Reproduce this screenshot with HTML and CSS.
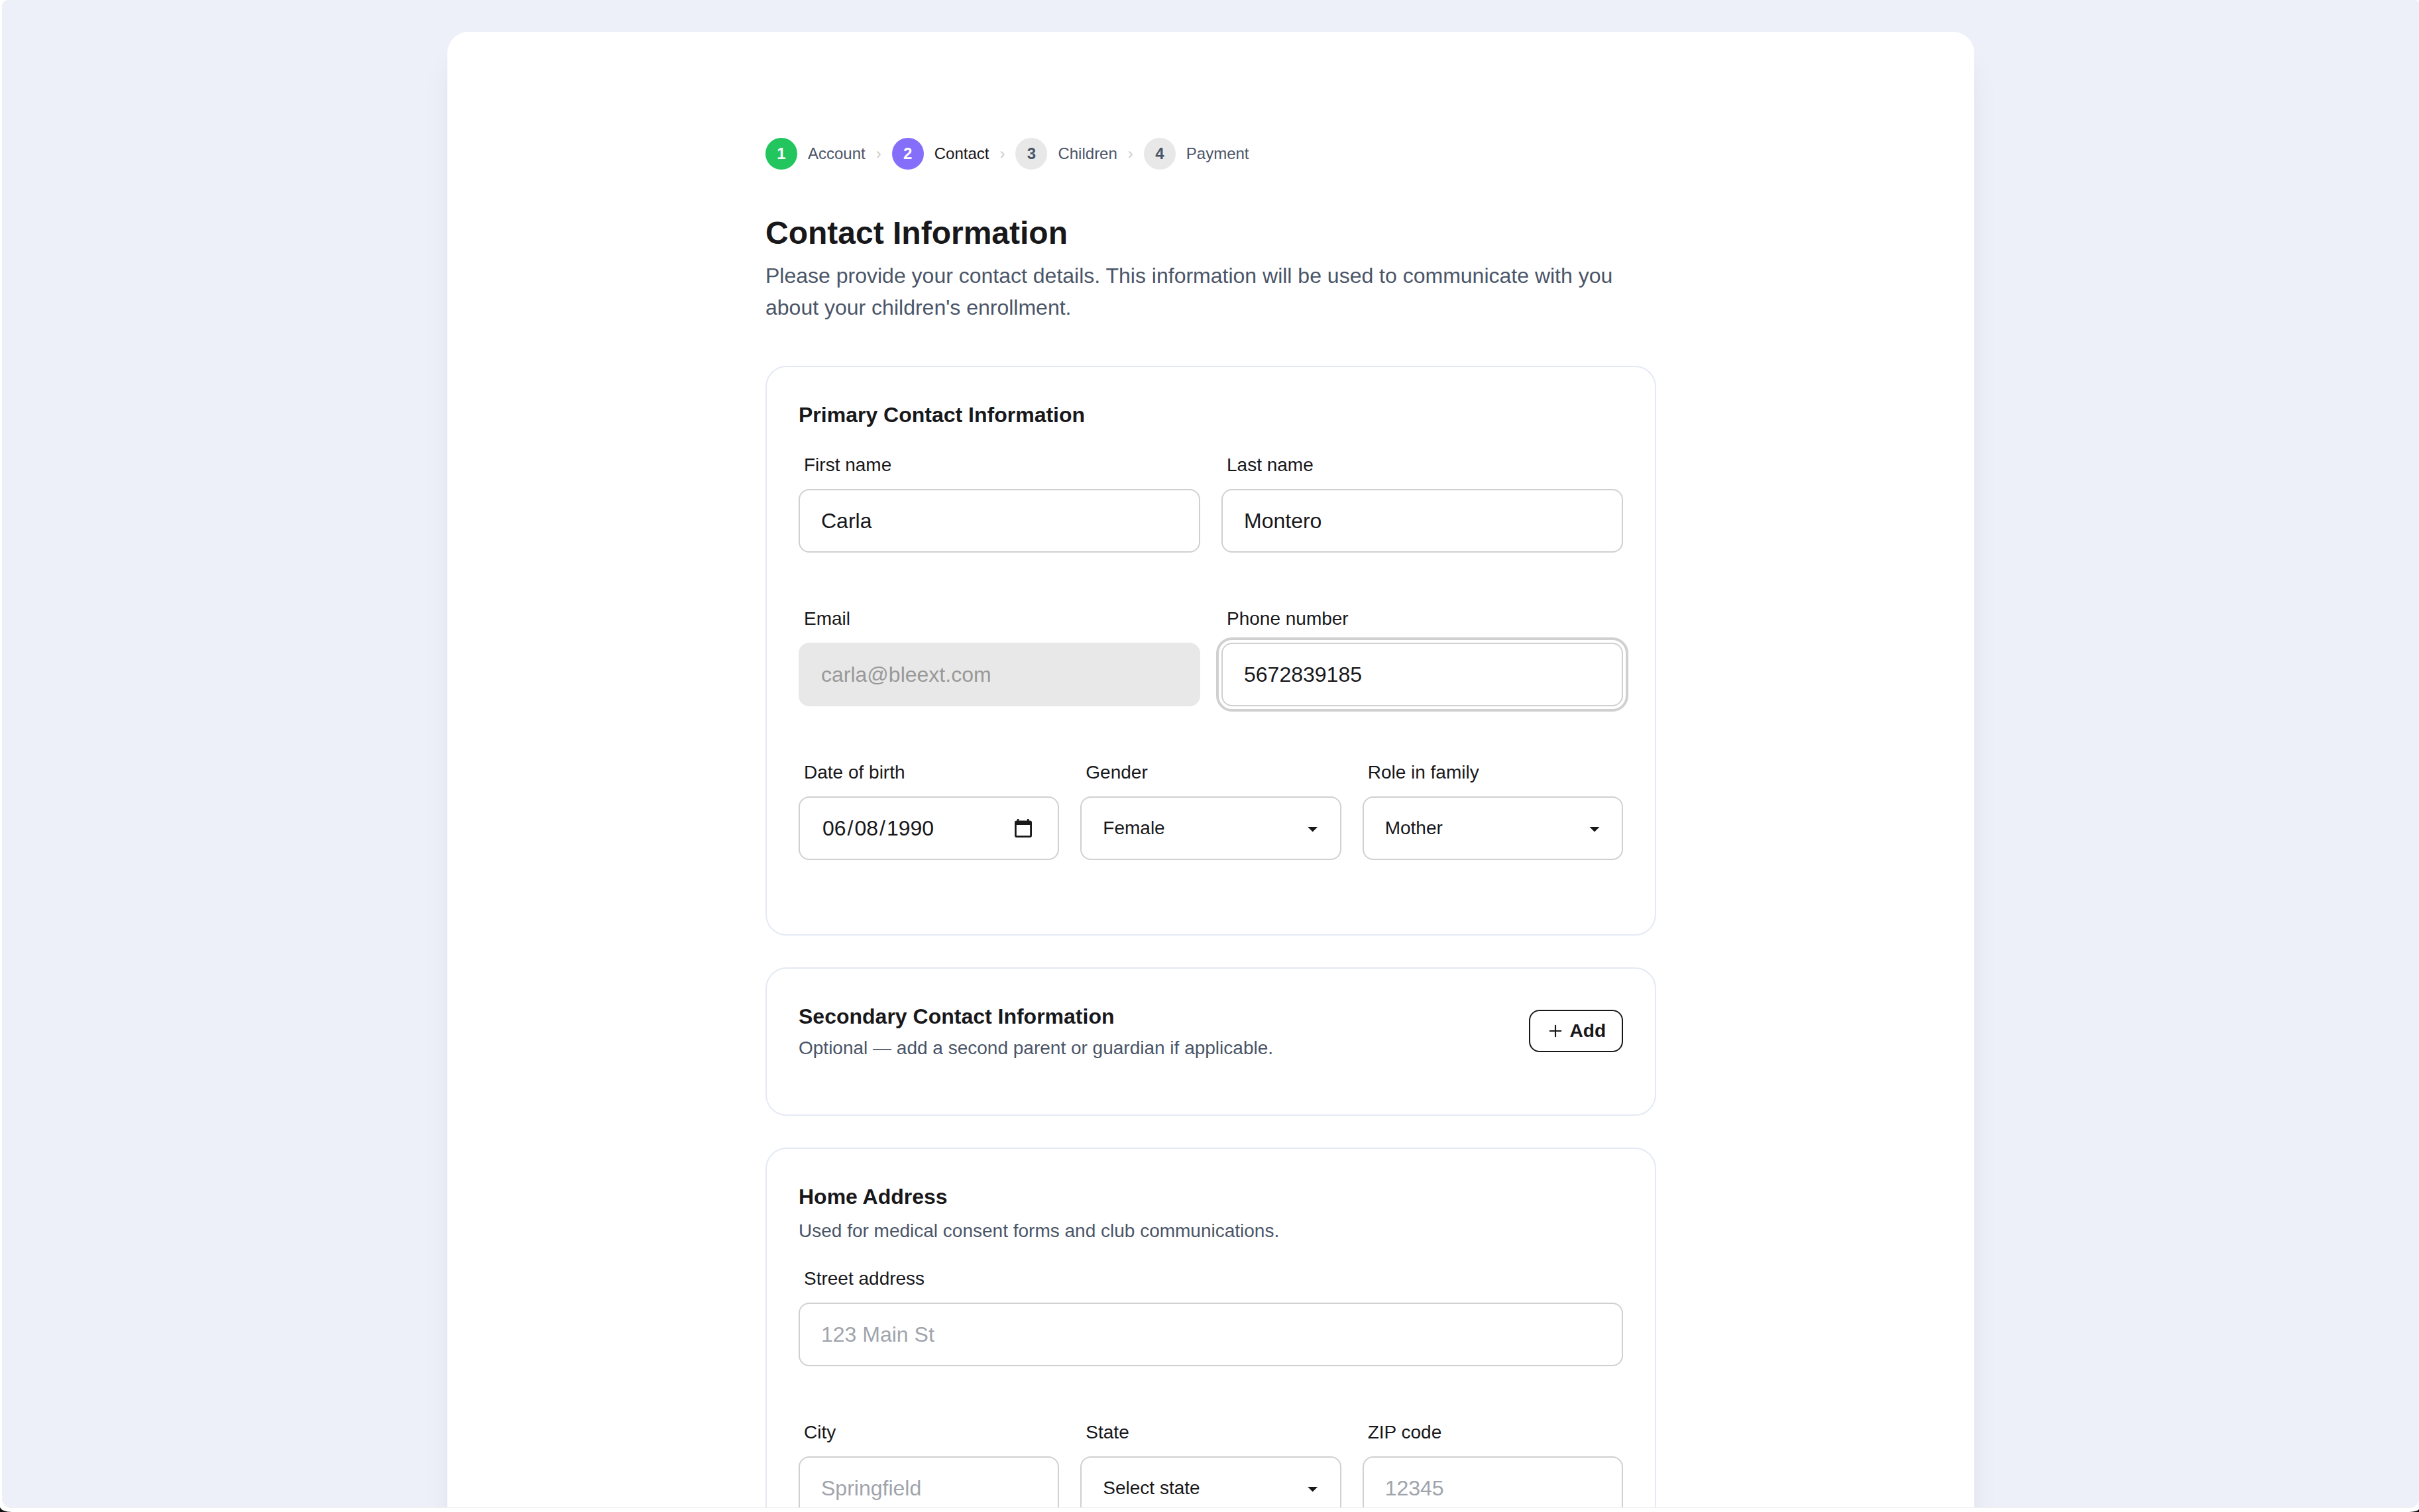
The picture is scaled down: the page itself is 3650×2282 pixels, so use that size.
FILE: index.html
```
<!DOCTYPE html>
<html lang="en">

<head>
  <meta charset="UTF-8">
  <title>Contact Information</title>
  <link rel="stylesheet" href="styles.css">
</head>

<body>
  <div class="window">
    <div class="viewport">
      <main class="panel">
        <form class="content" action="">
          <nav class="steps">
            <span class="step-number done">1</span>
            <span>Account</span>
            <span class="step-arrow">›</span>
            <span class="step-number active">2</span>
            <span class="step-current">Contact</span>
            <span class="step-arrow">›</span>
            <span class="step-number">3</span>
            <span>Children</span>
            <span class="step-arrow">›</span>
            <span class="step-number">4</span>
            <span>Payment</span>
          </nav>

          <h1 class="title">Contact Information</h1>
          <p class="intro">Please provide your contact details. This information will be used to communicate with you about your children's enrollment.</p>

          <section class="card">
            <h2 class="card-title">Primary Contact Information</h2>
            <div class="rows">
              <div class="row two">
                <div class="field">
                  <label for="first-name">First name</label>
                  <input class="control" type="text" id="first-name" value="Carla">
                </div>
                <div class="field">
                  <label for="last-name">Last name</label>
                  <input class="control" type="text" id="last-name" value="Montero">
                </div>
              </div>
              <div class="row two">
                <div class="field">
                  <label for="email">Email</label>
                  <input class="control" type="text" id="email" value="carla@bleext.com" disabled>
                </div>
                <div class="field">
                  <label for="phone">Phone number</label>
                  <input class="control focused" type="text" id="phone" value="5672839185">
                </div>
              </div>
              <div class="row three">
                <div class="field">
                  <label>Date of birth</label>
                  <div class="control date">
                    <div><span class="date-part">06</span>/<span class="date-part">08</span>/<span class="date-part">1990</span></div>
                    <svg class="calendar" viewBox="0 0 26 28">
                      <path d="M3 2.500h.8V0h2.600v2.500H19V0h2.600v2.500H23a3 3 0 0 1 3 3V25a3 3 0 0 1-3 3H3a3 3 0 0 1-3-3V5.500a3 3 0 0 1 3-3zM2.800 9v16.200h20.400V9z" fill-rule="evenodd" />
                    </svg>
                  </div>
                </div>
                <div class="field">
                  <label>Gender</label>
                  <div class="control select">Female<span class="caret"></span></div>
                </div>
                <div class="field">
                  <label>Role in family</label>
                  <div class="control select">Mother<span class="caret"></span></div>
                </div>
              </div>
            </div>
          </section>

          <section class="card secondary">
            <div>
              <h2 class="card-title">Secondary Contact Information</h2>
              <p class="card-text">Optional — add a second parent or guardian if applicable.</p>
            </div>
            <button class="add-button" type="button">
              <svg class="plus" viewBox="0 0 28 28">
                <path d="M14 5.800v16.400M5.800 14h16.400" />
              </svg>
              Add
            </button>
          </section>

          <section class="card address">
            <h2 class="card-title">Home Address</h2>
            <p class="card-text">Used for medical consent forms and club communications.</p>
            <div class="rows">
              <div class="row">
                <div class="field">
                  <label for="street">Street address</label>
                  <input class="control" type="text" id="street" placeholder="123 Main St">
                </div>
              </div>
              <div class="row three">
                <div class="field">
                  <label for="city">City</label>
                  <input class="control" type="text" id="city" placeholder="Springfield">
                </div>
                <div class="field">
                  <label>State</label>
                  <div class="control select">Select state<span class="caret"></span></div>
                </div>
                <div class="field">
                  <label for="zip">ZIP code</label>
                  <input class="control" type="text" id="zip" placeholder="12345">
                </div>
              </div>
            </div>
          </section>
        </form>
      </main>
    </div>
  </div>
</body>

</html>
```

FILE: styles.css
```
* {
  box-sizing: border-box;
}

body {
  margin: 0;
  background: #111;
  color: #18181b;
  font-family: "Liberation Sans", Arial, sans-serif;
  overflow: hidden;
}

h1,
h2,
p {
  margin: 0;
}

.window {
  height: 2282px;
  padding-left: 3px;
  background: #fff;
  border-radius: 0 0 15px 18px / 0 0 5px 8px;
}

.viewport {
  height: 2276px;
  padding: 48px 0 0 1px;
  overflow: hidden;
  background: #edf0f9;
  border-bottom: 1px solid #f0f0f0;
  border-radius: 9px 6px 14px 14px;
}

.panel {
  width: 2304px;
  height: 2700px;
  margin: 0 auto;
  padding-top: 160px;
  background: #fff;
  border-radius: 32px;
  box-shadow: 0 40px 50px -10px rgba(0, 0, 0, 0.08), 0 16px 20px -12px rgba(0, 0, 0, 0.08);
}

.content {
  width: 1344px;
  margin: 0 auto;
}

/* steps */
.steps {
  display: flex;
  align-items: center;
  gap: 16px;
  height: 48px;
  color: #4a5568;
  font-size: 24px;
}

.step-number {
  display: flex;
  align-items: center;
  justify-content: center;
  width: 48px;
  height: 48px;
  border-radius: 50%;
  background: #e8e8e8;
  font-weight: bold;
}

.step-number.done {
  background: #22c55e;
  color: #fff;
}

.step-number.active {
  background: #856ffa;
  color: #fff;
}

.step-current {
  color: #18181b;
}

.step-arrow {
  color: #ccc;
}

.title {
  margin-top: 64px;
  font-size: 48px;
  line-height: 64px;
}

.intro {
  margin: 8px 0 64px;
  color: #4a5568;
  font-size: 32px;
  line-height: 48px;
}

/* cards */
.card {
  margin-bottom: 48px;
  padding: 48px 48px 112px;
  border: 2px solid #e4e9f3;
  border-radius: 32px;
}

.card-title {
  font-size: 32px;
  line-height: 48px;
}

.card-text {
  color: #4a5568;
  font-size: 28px;
  line-height: 40px;
}

.secondary {
  display: flex;
  align-items: flex-start;
  justify-content: space-between;
  height: 224px;
}

.secondary .card-text {
  margin-top: 4px;
}

.address .card-text {
  margin-top: 8px;
}

.add-button {
  display: flex;
  align-items: center;
  gap: 8px;
  height: 64px;
  margin-top: 14px;
  padding: 0 24px;
  border: 2px solid #18181b;
  border-radius: 16px;
  background: #fff;
  color: #18181b;
  font: bold 28px "Liberation Sans", Arial, sans-serif;
}

.plus {
  width: 28px;
  height: 28px;
  fill: none;
  stroke: #18181b;
  stroke-width: 2.2;
  stroke-linecap: round;
}

/* form fields */
.rows {
  display: grid;
  gap: 80px;
  margin-top: 32px;
}

.row {
  display: grid;
  gap: 32px;
}

.two {
  grid-template-columns: repeat(2, 1fr);
}

.three {
  grid-template-columns: repeat(3, 1fr);
}

.field label {
  display: block;
  margin-bottom: 16px;
  padding-left: 8px;
  font-size: 28px;
  line-height: 40px;
}

.control {
  display: block;
  width: 100%;
  height: 96px;
  padding: 0 32px;
  border: 2px solid #d0d0d0;
  border-radius: 16px;
  background: #fff;
  color: #18181b;
  font-family: inherit;
  font-size: 32px;
}

.control::placeholder {
  color: #a0a4ac;
}

.control:disabled {
  border-color: #e8e8e8;
  background: #e8e8e8;
  color: #999;
}

.control.focused {
  outline: 4px solid #d0d0d0;
  outline-offset: 4px;
}

.date,
.select {
  display: flex;
  align-items: center;
  justify-content: space-between;
}

.date-part {
  padding: 0 2px;
}

.calendar {
  width: 26px;
  height: 28px;
  margin-right: 7px;
  fill: #18181b;
}

.select {
  font-size: 28px;
}

.caret {
  width: 16px;
  height: 8px;
  margin: 3px 1px 0 0;
  background: #18181b;
  clip-path: polygon(0 0, 100% 0, 50% 100%);
}
```
